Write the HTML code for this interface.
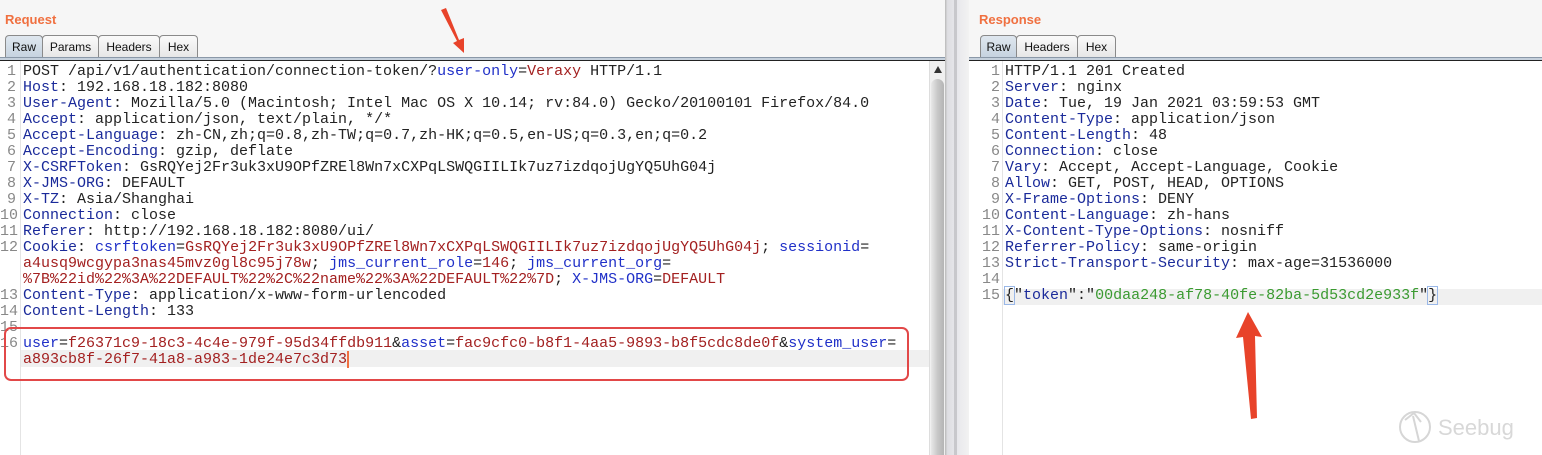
<!DOCTYPE html>
<html><head><meta charset="utf-8"><style>
*{margin:0;padding:0;box-sizing:border-box}
body{width:1542px;height:455px;overflow:hidden;background:#f6f6f6;font-family:"Liberation Sans",sans-serif;position:relative}
.title{position:absolute;top:12px;font-size:13px;font-weight:bold;color:#f07040}
.tab{position:absolute;top:35px;height:23px;border:1px solid #8a8a8a;border-bottom:none;border-radius:4px 4px 0 0;background:linear-gradient(#fafafa,#e6e6e6);font-size:12px;line-height:22px;text-align:center;color:#111}
.tab.sel{background:linear-gradient(#dfe7ef,#c5d2df)}
.bar{position:absolute;top:57px;height:4px;background:#c5d0dc;border-top:1px solid #8a98a8;border-bottom:1px solid #222}
.ed{position:absolute;top:61px;bottom:0;background:#fff;font-family:"Liberation Mono",monospace;font-size:15px;line-height:16px;color:#222}
.row{position:absolute;left:0;right:0;height:16px;white-space:pre}
.n{position:absolute;color:#888;text-align:right}
.k{color:#1a2a9a}.v{color:#a32020}.p{color:#2030c8}.g{color:#3a9a30}
</style></head><body>
<div class="title" style="left:5px">Request</div>
<div class="title" style="left:979px">Response</div>
<div class="tab sel" style="left:5px;width:38px">Raw</div>
<div class="tab" style="left:42px;width:57px">Params</div>
<div class="tab" style="left:98px;width:62px">Headers</div>
<div class="tab" style="left:159px;width:39px">Hex</div>
<div class="tab sel" style="left:980px;width:37px">Raw</div>
<div class="tab" style="left:1016px;width:62px">Headers</div>
<div class="tab" style="left:1077px;width:39px">Hex</div>
<div class="bar" style="left:0;width:945px"></div>
<div class="bar" style="left:969px;right:0"></div>
<div class="ed" style="left:0;width:929px">
<div style="position:absolute;left:20px;top:0;bottom:0;border-left:1px solid #e4e4e4"></div>
<div style="position:absolute;left:21px;right:0;top:289px;height:17px;background:#f0f0f0"></div>
<div id="L"></div>
</div>
<div style="position:absolute;left:929px;top:61px;width:16px;bottom:0;background:#f0f0f0;border-left:1px solid #ddd">
<div style="position:absolute;left:4px;top:5px;width:0;height:0;border-left:4px solid transparent;border-right:4px solid transparent;border-bottom:7px solid #333"></div>
<div style="position:absolute;left:1px;right:1px;top:18px;bottom:0;border-radius:7px 7px 0 0;background:linear-gradient(90deg,#e8e8e8,#c8c8c8,#b4b4b4)"></div>
</div>
<div style="position:absolute;left:945px;top:0;width:24px;bottom:0;background:linear-gradient(90deg,#b8b8b8,#dedee2 10%,#e8e8ec 50%,#f2f2f2)"></div>
<div style="position:absolute;left:954px;top:0;width:3px;bottom:0;background:#c8c8cc"></div>
<div class="ed" style="left:969px;right:0">
<div style="position:absolute;left:33px;top:0;bottom:0;border-left:1px solid #e4e4e4"></div>
<div style="position:absolute;left:34px;right:0;top:228px;height:16px;background:#f0f0f0"></div>
<div id="R"></div>
</div>
<div style="position:absolute;left:4px;top:327px;width:905px;height:54px;border:2px solid #e24848;border-radius:7px"></div>
<svg style="position:absolute;left:0;top:0" width="1542" height="455">
<polygon points="441,10 446,8 459,40 464,38 464,53 453,43 457,41" fill="#e8432a"/>
<polygon points="1248,312 1262,337 1255,336 1257,418 1251,419 1243,337 1236,338" fill="#e8432a"/>
<circle cx="1415" cy="427" r="15" fill="none" stroke="#d6d6d6" stroke-width="2"/>
<path d="M1405,420 L1414,413 L1421,422 M1413,416 L1419,441" fill="none" stroke="#d6d6d6" stroke-width="2"/>
<text x="1438" y="435" font-family="Liberation Sans,sans-serif" font-size="22" fill="#d8d8d8">Seebug</text>
</svg>
<script>
const L=[
[1,'POST /api/v1/authentication/connection-token/?<span class="p">user-only</span>=<span class="v">Veraxy</span> HTTP/1.1'],
[2,'<span class="k">Host</span>: 192.168.18.182:8080'],
[3,'<span class="k">User-Agent</span>: Mozilla/5.0 (Macintosh; Intel Mac OS X 10.14; rv:84.0) Gecko/20100101 Firefox/84.0'],
[4,'<span class="k">Accept</span>: application/json, text/plain, */*'],
[5,'<span class="k">Accept-Language</span>: zh-CN,zh;q=0.8,zh-TW;q=0.7,zh-HK;q=0.5,en-US;q=0.3,en;q=0.2'],
[6,'<span class="k">Accept-Encoding</span>: gzip, deflate'],
[7,'<span class="k">X-CSRFToken</span>: GsRQYej2Fr3uk3xU9OPfZREl8Wn7xCXPqLSWQGIILIk7uz7izdqojUgYQ5UhG04j'],
[8,'<span class="k">X-JMS-ORG</span>: DEFAULT'],
[9,'<span class="k">X-TZ</span>: Asia/Shanghai'],
[10,'<span class="k">Connection</span>: close'],
[11,'<span class="k">Referer</span>: http://192.168.18.182:8080/ui/'],
[12,'<span class="k">Cookie</span>: <span class="p">csrftoken</span>=<span class="v">GsRQYej2Fr3uk3xU9OPfZREl8Wn7xCXPqLSWQGIILIk7uz7izdqojUgYQ5UhG04j</span>; <span class="p">sessionid</span>='],
['','<span class="v">a4usq9wcgypa3nas45mvz0gl8c95j78w</span>; <span class="p">jms_current_role</span>=<span class="v">146</span>; <span class="p">jms_current_org</span>='],
['','<span class="v">%7B%22id%22%3A%22DEFAULT%22%2C%22name%22%3A%22DEFAULT%22%7D</span>; <span class="p">X-JMS-ORG</span>=<span class="v">DEFAULT</span>'],
[13,'<span class="k">Content-Type</span>: application/x-www-form-urlencoded'],
[14,'<span class="k">Content-Length</span>: 133'],
[15,''],
[16,'<span class="p">user</span>=<span class="v">f26371c9-18c3-4c4e-979f-95d34ffdb911</span>&amp;<span class="p">asset</span>=<span class="v">fac9cfc0-b8f1-4aa5-9893-b8f5cdc8de0f</span>&amp;<span class="p">system_user</span>='],
['','<span class="v">a893cb8f-26f7-41a8-a983-1de24e7c3d73</span><span style="border-left:2px solid #f07040"></span>']
];
const R=[
'HTTP/1.1 201 Created',
'<span class="k">Server</span>: nginx',
'<span class="k">Date</span>: Tue, 19 Jan 2021 03:59:53 GMT',
'<span class="k">Content-Type</span>: application/json',
'<span class="k">Content-Length</span>: 48',
'<span class="k">Connection</span>: close',
'<span class="k">Vary</span>: Accept, Accept-Language, Cookie',
'<span class="k">Allow</span>: GET, POST, HEAD, OPTIONS',
'<span class="k">X-Frame-Options</span>: DENY',
'<span class="k">Content-Language</span>: zh-hans',
'<span class="k">X-Content-Type-Options</span>: nosniff',
'<span class="k">Referrer-Policy</span>: same-origin',
'<span class="k">Strict-Transport-Security</span>: max-age=31536000',
'',
'<span style="outline:1px solid #9ab8e8">{</span>"<span class="k">token</span>":"<span class="g">00daa248-af78-40fe-82ba-5d53cd2e933f</span>"<span style="outline:1px solid #9ab8e8">}</span>'
];
let h='';L.forEach((r,i)=>{h+=`<div class="row" style="top:${3+i*16}px"><span class="n" style="left:0;width:16px">${r[0]}</span><span style="position:absolute;left:23px">${r[1]}</span></div>`});
document.getElementById('L').innerHTML=h;
h='';R.forEach((r,i)=>{h+=`<div class="row" style="top:${3+i*16}px"><span class="n" style="left:0;width:31px">${i+1}</span><span style="position:absolute;left:36px">${r}</span></div>`});
document.getElementById('R').innerHTML=h;
</script>
</body></html>
